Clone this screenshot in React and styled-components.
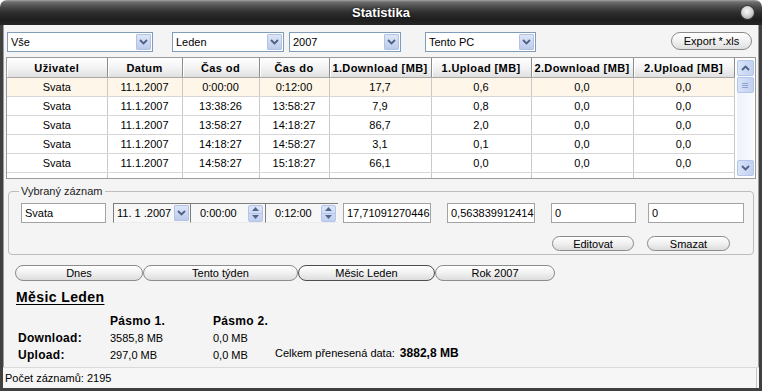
import React from "react";
import styled, { createGlobalStyle } from "styled-components";

const Global = createGlobalStyle`
  body {
    margin: 0;
    background: #fff;
    font-family: "Liberation Sans", Arial, sans-serif;
    font-size: 11px;
    color: #000;
  }
`;

const Window = styled.div`
  width: 762px;
  height: 391px;
  display: flex;
  flex-direction: column;
`;

const TitleBar = styled.div`
  height: 25px;
  flex-shrink: 0;
  display: grid;
  grid-template-columns: 1fr auto 1fr;
  align-items: center;
  border-radius: 7px 7px 0 0;
  background: linear-gradient(#a4a4a4 0, #6e6e6e 2px, #4a4a4a 7px, #2c2c2c 13px, #1e1e1e 20px, #262626 25px);
`;

const Title = styled.div`
  grid-column: 2;
  color: #fff;
  font-weight: bold;
  font-size: 13px;
  text-shadow: 0 0 2px #000;
`;

const CloseDot = styled.div`
  grid-column: 3;
  justify-self: end;
  margin-right: 8px;
  width: 13px;
  height: 13px;
  border-radius: 50%;
  background: radial-gradient(circle at 45% 40%, #fafafa 0, #d6d6d6 45%, #8d8d8d 100%);
  box-shadow: 0 0 0 1px #3a3a3a;
`;

const Frame = styled.div`
  flex: 1;
  display: flex;
  flex-direction: column;
  background: #f4f4f4;
  border: 3px solid #404040;
  border-top: none;
  box-shadow: inset 1px 0 #9c9c9c, inset -1px 0 #9c9c9c, inset 0 -1px #9c9c9c;
`;

const Toolbar = styled.div`
  display: flex;
  align-items: flex-start;
  margin-top: 7px;
  padding: 0 7px 0 4px;
`;

const Combo = styled.div`
  width: ${(p) => p.w}px;
  margin-left: ${(p) => p.ml || 0}px;
  height: 20px;
  box-sizing: border-box;
  border: 1px solid #7f9db9;
  background: #fff;
  display: flex;
  align-items: center;
`;

const ComboText = styled.span`
  flex: 1;
  padding-left: 3px;
  white-space: nowrap;
`;

const DropBtn = styled.span`
  width: 15px;
  height: 16px;
  margin-right: 1px;
  box-sizing: border-box;
  border: 1px solid #b3c3e4;
  border-radius: 1px;
  background: linear-gradient(#dde6f8, #bccbeb);
  display: flex;
  align-items: center;
  justify-content: center;
`;

const ExportBtn = styled.div`
  margin-left: auto;
  width: 81px;
  height: 18px;
  box-sizing: border-box;
  border: 1px solid #8a8a8a;
  border-radius: 9px;
  background: linear-gradient(#ffffff, #f1f1f1 50%, #dedede);
  display: flex;
  align-items: center;
  justify-content: center;
`;

const TableBox = styled.div`
  margin: 5px 3px 0 3px;
  height: 122px;
  box-sizing: border-box;
  border: 1px solid #9a9a9a;
  background: #fff;
  display: flex;
  overflow: hidden;
`;

const Grid = styled.table`
  width: 727px;
  border-collapse: collapse;
  table-layout: fixed;
  font-size: 11px;
  align-self: flex-start;
`;

const Th = styled.th`
  height: 19px;
  padding: 0;
  font-weight: bold;
  letter-spacing: 0.4px;
  white-space: nowrap;
  overflow: hidden;
  text-align: center;
  background: linear-gradient(#ffffff, #f2f2f2 55%, #e0e0e0);
  border-right: 1px solid #8c8c8c;
  border-bottom: 1px solid #a8a8a8;
  box-shadow: inset 1px 0 #fff;
`;

const Td = styled.td`
  height: 18px;
  padding: 0;
  text-align: center;
  white-space: nowrap;
  background: ${(p) => (p.sel ? "#fdf6e9" : "#fff")};
  border-right: 1px solid #c9c9c9;
  border-bottom: 1px solid #d6d6d6;
`;

const ScrollBar = styled.div`
  width: 17px;
  margin: 2px 0 2px 2px;
  display: flex;
  flex-direction: column;
  background: linear-gradient(to right, #eef2fb, #f9fbff);
`;

const ScrollBtn = styled.div`
  height: 16px;
  box-sizing: border-box;
  border: 1px solid #b5c5ea;
  border-radius: 2px;
  background: linear-gradient(to right, #d9e3f8, #c2d1f1);
  display: flex;
  align-items: center;
  justify-content: center;
  margin-top: ${(p) => (p.bottom ? "auto" : "0")};
`;

const Thumb = styled(ScrollBtn)`
  margin-top: 1px;
  flex-direction: column;
  gap: 1px;
`;

const GripLine = styled.span`
  width: 6px;
  height: 1px;
  background: #8ea3cc;
`;

const Group = styled.fieldset`
  margin: 6px 5px 0 5px;
  padding: 5px 9px 3px 12px;
  border: 1px solid #bdbdbd;
  border-radius: 4px;
`;

const Legend = styled.legend`
  padding: 0 2px;
  margin-left: -2px;
  line-height: 13px;
  color: #222;
`;

const FieldRow = styled.div`
  display: flex;
  align-items: flex-start;
`;

const Field = styled.div`
  width: ${(p) => p.w}px;
  margin-left: ${(p) => p.ml || 0}px;
  height: 20px;
  box-sizing: border-box;
  border: 1px solid #a3a3a3;
  background: #fff;
  padding-left: 3px;
  display: flex;
  align-items: center;
  white-space: nowrap;
  overflow: hidden;
`;

const Sunken = styled.div`
  width: ${(p) => p.w}px;
  margin-left: ${(p) => p.ml || 0}px;
  height: 20px;
  box-sizing: border-box;
  border-top: 1px solid #7c7c7c;
  border-left: 1px solid #7c7c7c;
  border-bottom: 1px solid #ececec;
  background: #f7f7f7;
  display: flex;
  align-items: center;
  white-space: nowrap;
`;

const SunkenText = styled.span`
  flex: 1;
  padding-left: ${(p) => p.pl || 3}px;
`;

const Spinner = styled.div`
  width: 15px;
  height: 17px;
  margin-right: 2px;
  box-sizing: border-box;
  display: flex;
  flex-direction: column;
  border: 1px solid #b5c5ea;
  border-radius: 2px;
  background: linear-gradient(#dce5f8, #c1d0f0);
`;

const SpinHalf = styled.span`
  flex: 1;
  display: flex;
  align-items: center;
  justify-content: center;
  border-top: ${(p) => (p.lower ? "1px solid #b5c5ea" : "none")};
`;

const ButtonRow = styled.div`
  display: flex;
  justify-content: flex-end;
  gap: 13px;
  margin-top: 13px;
  padding-right: 14px;
`;

const PillBtn = styled.div`
  width: ${(p) => p.w}px;
  height: 15px;
  box-sizing: border-box;
  border: 1px solid #8a8a8a;
  border-radius: 8px;
  background: linear-gradient(#ffffff, #f0f0f0 50%, #dcdcdc);
  display: flex;
  align-items: center;
  justify-content: center;
`;

const Tabs = styled.div`
  display: flex;
  margin: 10px 0 0 12px;
`;

const Tab = styled.div`
  width: ${(p) => p.w}px;
  height: 16px;
  box-sizing: border-box;
  border: 1px solid ${(p) => (p.active ? "#4e4e4e" : "#8c8c8c")};
  border-radius: 8px;
  background: linear-gradient(#ffffff, #f1f1f1 50%, #dddddd);
  display: flex;
  align-items: center;
  justify-content: center;
`;

const Heading = styled.div`
  margin: 8px 0 0 13px;
  font-size: 14px;
  line-height: 16px;
  font-weight: bold;
  letter-spacing: 0.4px;
  text-decoration: underline;
  text-underline-offset: 2px;
`;

const Stats = styled.div`
  display: grid;
  grid-template-columns: 92px 103px 62px auto;
  grid-auto-rows: 17px;
  align-items: center;
  margin: 7px 0 0 15px;
`;

const Bold = styled.span`
  font-weight: bold;
  font-size: 12px;
  letter-spacing: 0.3px;
`;

const Total = styled.span`
  align-self: start;
  white-space: nowrap;
`;

const TotalValue = styled.b`
  margin-left: 5px;
  font-size: 12px;
`;

const StatusBar = styled.div`
  margin-top: auto;
  height: 21px;
  box-sizing: border-box;
  border-top: 1px solid #d9d9d9;
  background: #f6f6f6;
  display: flex;
`;

const StatusPanel = styled.div`
  flex: 1;
  padding-left: 2px;
  margin-right: 2px;
  display: flex;
  align-items: center;
  border-right: 1px solid #c4c4c4;
`;

const ChevronDown = ({ color = "#4d6185" }) => (
  <svg width="9" height="6" viewBox="0 0 9 6">
    <path d="M1 1l3.5 3.5L8 1" stroke={color} strokeWidth="1.8" fill="none" />
  </svg>
);

const ChevronUp = ({ color = "#4d6185" }) => (
  <svg width="9" height="6" viewBox="0 0 9 6">
    <path d="M1 5l3.5-3.5L8 5" stroke={color} strokeWidth="1.8" fill="none" />
  </svg>
);

const Tri = ({ up }) => (
  <svg width="7" height="4" viewBox="0 0 7 4">
    <polygon points={up ? "0,4 3.5,0 7,4" : "0,0 3.5,4 7,0"} fill="#53658a" />
  </svg>
);

const columns = [
  ["Uživatel", 100],
  ["Datum", 75],
  ["Čas od", 77],
  ["Čas do", 70],
  ["1.Download [MB]", 102],
  ["1.Upload [MB]", 100],
  ["2.Download [MB]", 102],
  ["2.Upload [MB]", 101],
];

const rows = [
  ["Svata", "11.1.2007", "0:00:00", "0:12:00", "17,7", "0,6", "0,0", "0,0"],
  ["Svata", "11.1.2007", "13:38:26", "13:58:27", "7,9", "0,8", "0,0", "0,0"],
  ["Svata", "11.1.2007", "13:58:27", "14:18:27", "86,7", "2,0", "0,0", "0,0"],
  ["Svata", "11.1.2007", "14:18:27", "14:58:27", "3,1", "0,1", "0,0", "0,0"],
  ["Svata", "11.1.2007", "14:58:27", "15:18:27", "66,1", "0,0", "0,0", "0,0"],
  ["", "", "", "", "", "", "", ""],
];

const tabs = [
  ["Dnes", 128],
  ["Tento týden", 155],
  ["Měsic Leden", 137, true],
  ["Rok 2007", 120],
];

const Spin = () => (
  <Spinner>
    <SpinHalf>
      <Tri up />
    </SpinHalf>
    <SpinHalf lower>
      <Tri />
    </SpinHalf>
  </Spinner>
);

export default function App() {
  return (
    <>
      <Global />
      <Window>
        <TitleBar>
          <Title>Statistika</Title>
          <CloseDot />
        </TitleBar>
        <Frame>
          <Toolbar>
            <Combo w={146}>
              <ComboText>Vše</ComboText>
              <DropBtn><ChevronDown /></DropBtn>
            </Combo>
            <Combo w={112} ml={19}>
              <ComboText>Leden</ComboText>
              <DropBtn><ChevronDown /></DropBtn>
            </Combo>
            <Combo w={112} ml={5}>
              <ComboText>2007</ComboText>
              <DropBtn><ChevronDown /></DropBtn>
            </Combo>
            <Combo w={111} ml={24}>
              <ComboText>Tento PC</ComboText>
              <DropBtn><ChevronDown /></DropBtn>
            </Combo>
            <ExportBtn>Export *.xls</ExportBtn>
          </Toolbar>

          <TableBox>
            <Grid>
              <colgroup>
                {columns.map(([n, w]) => (
                  <col key={n} style={{ width: w }} />
                ))}
              </colgroup>
              <thead>
                <tr>
                  {columns.map(([n]) => (
                    <Th key={n}>{n}</Th>
                  ))}
                </tr>
              </thead>
              <tbody>
                {rows.map((r, i) => (
                  <tr key={i}>
                    {r.map((c, j) => (
                      <Td key={j} sel={i === 0}>{c}</Td>
                    ))}
                  </tr>
                ))}
              </tbody>
            </Grid>
            <ScrollBar>
              <ScrollBtn><ChevronUp /></ScrollBtn>
              <Thumb>
                <GripLine />
                <GripLine />
                <GripLine />
              </Thumb>
              <ScrollBtn bottom><ChevronDown /></ScrollBtn>
            </ScrollBar>
          </TableBox>

          <Group>
            <Legend>Vybraný záznam</Legend>
            <FieldRow>
              <Field w={85}>Svata</Field>
              <Sunken w={77} ml={7}>
                <SunkenText>11. 1 .2007</SunkenText>
                <DropBtn><ChevronDown /></DropBtn>
              </Sunken>
              <Sunken w={75}>
                <SunkenText pl={9}>0:00:00</SunkenText>
                <Spin />
              </Sunken>
              <Sunken w={73}>
                <SunkenText pl={9}>0:12:00</SunkenText>
                <Spin />
              </Sunken>
              <Field w={88} ml={5}>17,71091270446</Field>
              <Field w={88} ml={16}>0,563839912414</Field>
              <Field w={85} ml={16}>0</Field>
              <Field w={96} ml={12}>0</Field>
            </FieldRow>
            <ButtonRow>
              <PillBtn w={82}>Editovat</PillBtn>
              <PillBtn w={83}>Smazat</PillBtn>
            </ButtonRow>
          </Group>

          <Tabs>
            {tabs.map(([n, w, a]) => (
              <Tab key={n} w={w} active={a}>{n}</Tab>
            ))}
          </Tabs>

          <Heading>Měsic Leden</Heading>

          <Stats>
            <span />
            <Bold>Pásmo 1.</Bold>
            <Bold>Pásmo 2.</Bold>
            <span />
            <Bold>Download:</Bold>
            <span>3585,8 MB</span>
            <span>0,0 MB</span>
            <span />
            <Bold>Upload:</Bold>
            <span>297,0 MB</span>
            <span>0,0 MB</span>
            <Total>
              Celkem přenesená data:<TotalValue>3882,8 MB</TotalValue>
            </Total>
          </Stats>

          <StatusBar>
            <StatusPanel>Počet záznamů: 2195</StatusPanel>
          </StatusBar>
        </Frame>
      </Window>
    </>
  );
}
